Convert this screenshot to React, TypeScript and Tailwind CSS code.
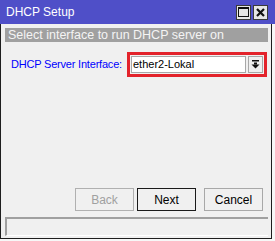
const font = { fontFamily: '"Liberation Sans", Arial, sans-serif' };

const TitleButton = ({ kind }: { kind: "max" | "close" }) => (
  <div className="w-[15px] h-[15px] bg-[#e6e6e6] border border-[#3a3a3a] flex items-center justify-center">
    {kind === "max" ? (
      <svg width="11" height="10" viewBox="0 0 11 10">
        <rect x="0.5" y="0.5" width="10" height="9" fill="none" stroke="#111" />
        <rect x="0" y="0" width="11" height="2" fill="#111" />
      </svg>
    ) : (
      <svg width="9" height="9" viewBox="0 0 9 9">
        <path d="M1 1 L8 8 M8 1 L1 8" stroke="#111" strokeWidth="2.2" />
      </svg>
    )}
  </div>
);

const DropArrow = () => (
  <svg width="9" height="9" viewBox="0 0 9 9">
    <rect x="1" y="0" width="7" height="1.5" fill="#111" />
    <rect x="3" y="2.5" width="3" height="2" fill="#111" />
    <path d="M0.5 4.5 L8.5 4.5 L4.5 8.5 Z" fill="#111" />
  </svg>
);

export default function App() {
  return (
    <div className="w-[275px] h-[241px] bg-[#f7f7f7] overflow-hidden text-[12px]" style={font}>
      {/* Title bar */}
      <div className="h-[24px] bg-[#4f4fc8] flex items-center justify-between pl-[6px] pr-[7px]">
        <span className="text-white text-[12px]">DHCP Setup</span>
        <div className="flex gap-[2px]">
          <TitleButton kind="max" />
          <TitleButton kind="close" />
        </div>
      </div>

      {/* Body */}
      <div className="w-[272px] h-[215px] bg-[#f0f0f0] border-l border-r border-b border-[#1e1e1e] flex flex-col pl-[4px] pr-[3px] pt-[4px]">
        <div className="h-[14px] bg-[#a0a0a0] text-[#f4f4f4] text-[12.5px] leading-[14px] pl-[3px] whitespace-nowrap overflow-hidden">
          Select interface to run DHCP server on
        </div>

        <div className="flex items-center mt-[10px]">
          <span className="text-[#0000ff] text-[11px] tracking-[-0.2px] pl-[6px] w-[122px] whitespace-nowrap">
            DHCP Server Interface:
          </span>
          <div className="w-[140px] h-[25px] border-[3px] border-[#e3232b] flex items-center pl-[1px] pr-[1px] gap-[2px]">
            <div className="flex-1 h-[17px] bg-white border border-[#a8a8a8] flex items-center text-black text-[11px] leading-none pl-[1px]">
              ether2-Lokal
            </div>
            <div className="w-[15px] h-[17px] bg-[#f0f0f0] border border-[#a8a8a8] flex items-center justify-center">
              <DropArrow />
            </div>
          </div>
        </div>

        <div className="flex-1" />

        <div className="flex justify-end pr-[5px]">
          <div className="w-[59px] h-[23px] border border-[#b0b0b0] flex items-center justify-center text-[#a0a0a0]">
            Back
          </div>
          <div className="w-[59px] h-[23px] border border-[#1a1a1a] flex items-center justify-center text-black ml-[3px]">
            Next
          </div>
          <div className="w-[59px] h-[23px] border border-[#a8a8a8] flex items-center justify-center text-black ml-[8px]">
            Cancel
          </div>
        </div>

        <div className="h-[19px] mt-[6px] mb-[2px] border-t-2 border-l-2 border-[#a0a0a0] border-b border-b-white" />
      </div>
    </div>
  );
}
